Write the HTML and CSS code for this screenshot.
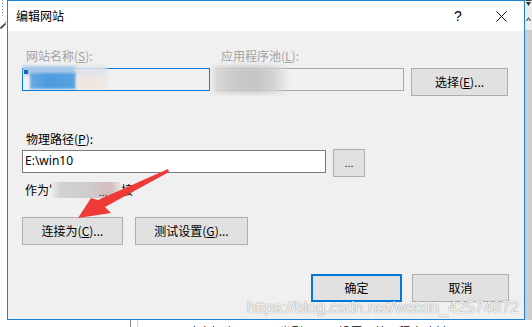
FILE: index.html
```html
<!DOCTYPE html>
<html lang="zh-CN">
<head>
<meta charset="utf-8">
<title>编辑网站</title>
<link rel="stylesheet" href="styles.css">
</head>
<body>
<div class="screen">
  <div class="left-strip">
    <div class="dots"></div>
    <svg class="pencil" width="7" height="8" viewBox="0 0 7 8"><path d="M0.5 7.5 L5.5 2.5" stroke="#333" stroke-width="1.6" fill="none"/><path d="M5 1.5 L6.5 0.5" stroke="#777" stroke-width="1" fill="none"/></svg>
  </div>

  <div class="dialog">
    <div class="titlebar">
      <span class="title">编辑网站</span>
      <span class="tbtn help">?</span>
      <span class="tbtn close"><svg width="11" height="11" viewBox="0 0 11 11"><path d="M0.5 0.5 L10.5 10.5 M10.5 0.5 L0.5 10.5" stroke="#111" stroke-width="1" fill="none"/></svg></span>
    </div>

    <div class="client">
      <div class="site-grid">
        <span class="lbl disabled">网站名称(<u>S</u>):</span>
        <span class="lbl disabled">应用程序池(<u>L</u>):</span>
        <span></span>
        <div class="field focus">
          <span class="smear s-lightblue"></span>
          <span class="smear s-grey"></span>
          <span class="smear s-blue"></span>
          <span class="smear s-pink"></span>
          <span class="caret-mark"></span>
        </div>
        <div class="field">
          <span class="smear s-pool"></span>
        </div>
        <button class="btn">选择(<u>E</u>)...</button>
      </div>

      <span class="lbl path-label">物理路径(<u>P</u>):</span>
      <div class="path-row">
        <div class="field path-input">E:\win10</div>
        <button class="btn dots-btn">...</button>
      </div>

      <div class="as-row">作为'<span class="redact"><span class="redact-dots">...</span></span>接</div>

      <div class="btn-row">
        <button class="btn w-connect">连接为(<u>C</u>)...</button>
        <button class="btn w-test">测试设置(<u>G</u>)...</button>
      </div>

      <div class="ok-row">
        <button class="btn default w-ok">确定</button>
        <button class="btn w-cancel">取消</button>
      </div>
    </div>
  </div>

  <div class="right-strip">
    <div class="sb-top">
      <svg width="7" height="24" viewBox="0 0 7 24"><path d="M0.5 0.5 H6.5" stroke="#444"/><path d="M1 2 L6 2 L3.5 6 Z" fill="#333"/><path d="M1.5 21 L3.5 18 L5.5 21" stroke="#555" stroke-width="1.2" fill="none"/></svg>
    </div>
    <div class="sb-track"></div>
  </div>

  <div class="bottom-strip">
    <span class="vline dark"></span>
    <span class="vline light"></span>
    <span class="below-text">HTTP 响应标头　MIME 类型　SSL 设置　处理程序映射</span>
  </div>

  <svg class="arrow" width="532" height="327" viewBox="0 0 532 327">
    <polygon points="168,169 98,200 91,198 78,218 111,213 105,207 169,172" fill="#ee3b38"/>
  </svg>

  <div class="watermark">https://blog.csdn.net/weixin_42574872</div>
</div>
</body>
</html>
```

FILE: styles.css
```css
html, body {
  margin: 0;
  padding: 0;
  background: #ffffff;
}

body {
  font-family: "Noto Sans CJK SC", "Noto Sans", sans-serif;
  font-size: 12px;
  color: #000;
}

.screen {
  position: relative;
  width: 532px;
  height: 327px;
  overflow: hidden;
  display: grid;
  grid-template-columns: 7px 518px 7px;
  grid-template-rows: 320px 7px;
}

/* left edge of the underlying window */
.left-strip {
  display: flex;
  flex-direction: column;
  align-items: flex-start;
  background: #fff;
}

.dots {
  margin-left: 2px;
  width: 1px;
  height: 18px;
  background: repeating-linear-gradient(to bottom, #8a8a8a 0 1px, transparent 1px 3px);
}

.pencil {
  margin-top: 3px;
}

/* dialog */
.dialog {
  box-sizing: border-box;
  border: 1px solid #1883d7;
  display: flex;
  flex-direction: column;
  min-height: 0;
}

.titlebar {
  height: 30px;
  flex: none;
  background: #fff;
  display: flex;
  align-items: center;
  padding-left: 8px;
}

.title {
  flex: 1;
  line-height: 16px;
}

.tbtn {
  height: 30px;
  display: flex;
  align-items: center;
  justify-content: center;
}

.help {
  width: 44px;
  font-family: "Liberation Sans", sans-serif;
  font-size: 14px;
  padding-left: 2px;
  box-sizing: border-box;
}

.close {
  width: 45px;
}

.client {
  flex: 1;
  background: #f0f0f0;
  padding: 17px 15px 17px 14px;
  display: flex;
  flex-direction: column;
  align-items: flex-start;
}

.lbl {
  line-height: 16px;
  padding-left: 4px;
  white-space: nowrap;
}

.lbl.disabled {
  color: #a2a2a2;
}

u {
  text-underline-offset: 1px;
}

.site-grid {
  display: grid;
  grid-template-columns: 188px 187px 97px;
  column-gap: 7px;
  row-gap: 4px;
  align-items: start;
}

.field {
  position: relative;
  box-sizing: border-box;
  height: 23px;
  border: 1px solid #a6a6a6;
  background: #f0f0f0;
}

.field.focus {
  border-color: #0078d7;
}

.smear {
  position: absolute;
  display: block;
}

.s-lightblue {
  left: 0;
  top: -3px;
  width: 54px;
  height: 9px;
  background: #a8c8e8;
  filter: blur(1.5px);
}

.s-grey {
  left: 52px;
  top: -3px;
  width: 32px;
  height: 16px;
  background: #dfe3e9;
  filter: blur(2px);
}

.s-blue {
  left: 7px;
  top: 4px;
  width: 46px;
  height: 16px;
  background: linear-gradient(90deg, #6aaae4, #4d9be0 40%, #5aa3e2);
  filter: blur(1px);
}

.s-pink {
  left: 53px;
  top: 6px;
  width: 30px;
  height: 14px;
  background: #efe6e2;
  filter: blur(1.5px);
}

.caret-mark {
  position: absolute;
  left: 1px;
  top: 1px;
  width: 4px;
  height: 4px;
  background: #1464c4;
}

.s-pool {
  left: -5px;
  top: -3px;
  width: 76px;
  height: 27px;
  background: linear-gradient(90deg, #dcdcdc, #cbcbcb 25%, #c6c4c4 55%, #d2d2d2 80%, rgba(224,224,224,0));
  filter: blur(2.5px);
}

.btn {
  box-sizing: border-box;
  height: 28px;
  padding: 0;
  border: 1px solid #adadad;
  background: #e1e1e1;
  font: inherit;
  line-height: 16px;
  color: #000;
  white-space: nowrap;
}

.btn.default {
  border: 2px solid #0078d7;
}

.path-label {
  margin-top: 35px;
}

.path-row {
  display: flex;
  align-items: flex-start;
  column-gap: 7px;
  margin-top: 2px;
}

.path-input {
  width: 304px;
  margin-top: 1px;
  background: #fff;
  border-color: #7a7a7a;
  padding-left: 2px;
  font-family: "Noto Sans", "Liberation Sans", sans-serif;
  font-size: 12px;
  line-height: 20px;
}

.dots-btn {
  width: 32px;
  font-family: "Liberation Sans", sans-serif;
  font-size: 11px;
}

.as-row {
  margin-top: 5px;
  padding-left: 3px;
  line-height: 16px;
  display: flex;
  align-items: center;
  white-space: nowrap;
}

.redact {
  display: inline-flex;
  align-items: flex-end;
  justify-content: flex-end;
  width: 69px;
  height: 16px;
  position: relative;
  background: linear-gradient(90deg, rgba(210,210,210,0.2), #d3d3d3 12%, #cfcbcb 55%, #d4bcbd 85%, rgba(220,200,200,0.3));
}

.redact-dots {
  font-size: 10px;
  line-height: 12px;
  color: #222;
  margin-right: 14px;
}

.btn-row {
  display: flex;
  column-gap: 12px;
  margin-top: 19px;
}

.w-connect { width: 101px; }
.w-test { width: 113px; }

.ok-row {
  margin-top: auto;
  align-self: flex-end;
  display: flex;
  column-gap: 10px;
}

.w-ok { width: 91px; }
.w-cancel { width: 97px; }

/* right edge: scrollbar of the window behind */
.right-strip {
  display: flex;
  flex-direction: column;
}

.sb-top {
  height: 30px;
  background: #ececec;
}

.sb-top svg {
  display: block;
}

.sb-track {
  flex: 1;
  background: #cdcdcd;
}

/* strip below the dialog */
.bottom-strip {
  grid-column: 1 / -1;
  display: flex;
  align-items: flex-start;
  background: #fff;
  overflow: hidden;
}

.vline {
  width: 1px;
  height: 7px;
  flex: none;
}

.vline.dark {
  margin-left: 130px;
  background: #8c8c8c;
}

.vline.light {
  margin-left: 6px;
  background: #d4d4d4;
}

.below-text {
  margin-left: 15px;
  margin-top: 4px;
  line-height: 16px;
  white-space: nowrap;
}

.arrow {
  position: absolute;
  left: 0;
  top: 0;
  pointer-events: none;
}

.watermark {
  position: absolute;
  left: 247px;
  top: 299px;
  font-family: "Liberation Sans", sans-serif;
  font-size: 16px;
  line-height: 18px;
  color: rgba(255, 255, 255, 0.9);
  text-shadow: 0 0 1px rgba(0, 0, 0, 0.4), 0 0 2px rgba(0, 0, 0, 0.15);
  white-space: nowrap;
  pointer-events: none;
}
```
